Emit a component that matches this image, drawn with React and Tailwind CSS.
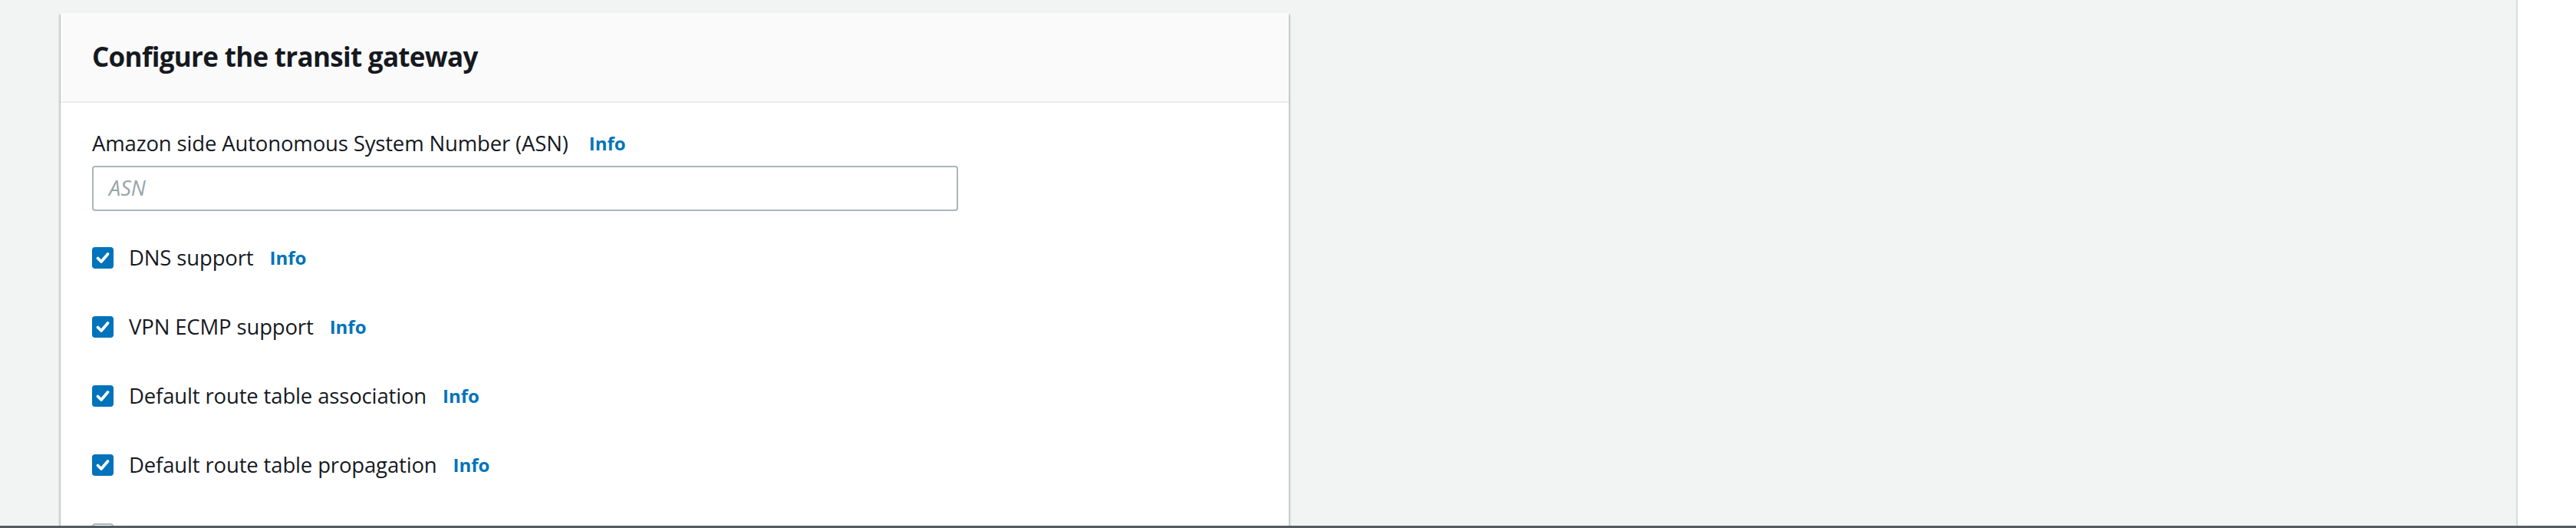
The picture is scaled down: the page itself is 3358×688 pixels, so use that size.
import React from "react";

const font = { fontFamily: '"Open Sans", "Liberation Sans", sans-serif' };

function Check({ checked }) {
  if (!checked) {
    return <div className="w-[28px] h-[28px] shrink-0 rounded-[4px] border-2 border-[#aab7b8] bg-white" />;
  }
  return (
    <div className="w-[28px] h-[28px] shrink-0 rounded-[4px] bg-[#0073bb] flex items-center justify-center">
      <svg width="28" height="28" viewBox="0 0 28 28">
        <polyline points="7.5,14.5 12,19 20.5,9" fill="none" stroke="#fff" strokeWidth="3.8" strokeLinecap="round" strokeLinejoin="round" />
      </svg>
    </div>
  );
}

function Row({ label, checked = true }) {
  return (
    <div className="flex items-center h-[28px]">
      <Check checked={checked} />
      <span className="ml-[20px] text-[27.5px] leading-[44px] tracking-[-0.15px] text-[#16191f]">{label}</span>
      <span className="ml-[21px] text-[24px] leading-[44px] font-bold text-[#0073bb]">Info</span>
    </div>
  );
}

export default function App() {
  return (
    <div className="w-full h-[688px] flex flex-col overflow-hidden bg-[#f2f3f3]" style={font}>
      <div className="flex-1 flex min-h-0">
        <div className="flex-1 min-w-0 pl-[79px] pt-[17px] overflow-hidden">
          <div className="w-[1601px] bg-white shadow-[0_2px_2px_0_rgba(0,28,36,0.3),2px_2px_2px_0_rgba(0,28,36,0.15),-2px_2px_2px_0_rgba(0,28,36,0.15)]">
            <div className="h-[117px] bg-[#fafafa] border-b-2 border-[#eaeded] pl-[41px] flex items-center">
              <h2 className="text-[35px] leading-[44px] font-bold text-[#16191f] tracking-[-0.7px] -mt-[1px]">Configure the transit gateway</h2>
            </div>
            <div className="pl-[41px] pt-[31px] pb-[40px]">
              <div className="flex items-center h-[44px]">
                <span className="text-[27.5px] leading-[44px] tracking-[-0.15px] text-[#16191f]">Amazon side Autonomous System Number (ASN)</span>
                <span className="ml-[27px] text-[24px] leading-[44px] font-bold text-[#0073bb]">Info</span>
              </div>
              <div className="mt-[7px] w-[1129px] h-[59px] rounded-[4px] border-2 border-[#aab7b8] flex items-center pl-[20px]">
                <span className="text-[27px] italic text-[#95a5a6]">ASN</span>
              </div>
              <div className="mt-[47px] flex flex-col gap-[62px]">
                <Row label="DNS support" />
                <Row label="VPN ECMP support" />
                <Row label="Default route table association" />
                <Row label="Default route table propagation" />
                <Row label="Multicast support" checked={false} />
              </div>
            </div>
          </div>
        </div>
        <div className="w-[78px] shrink-0 bg-white border-l-2 border-[#d5dbdb]" />
      </div>
      <div className="h-[3px] shrink-0 bg-[#545b64]" />
    </div>
  );
}
